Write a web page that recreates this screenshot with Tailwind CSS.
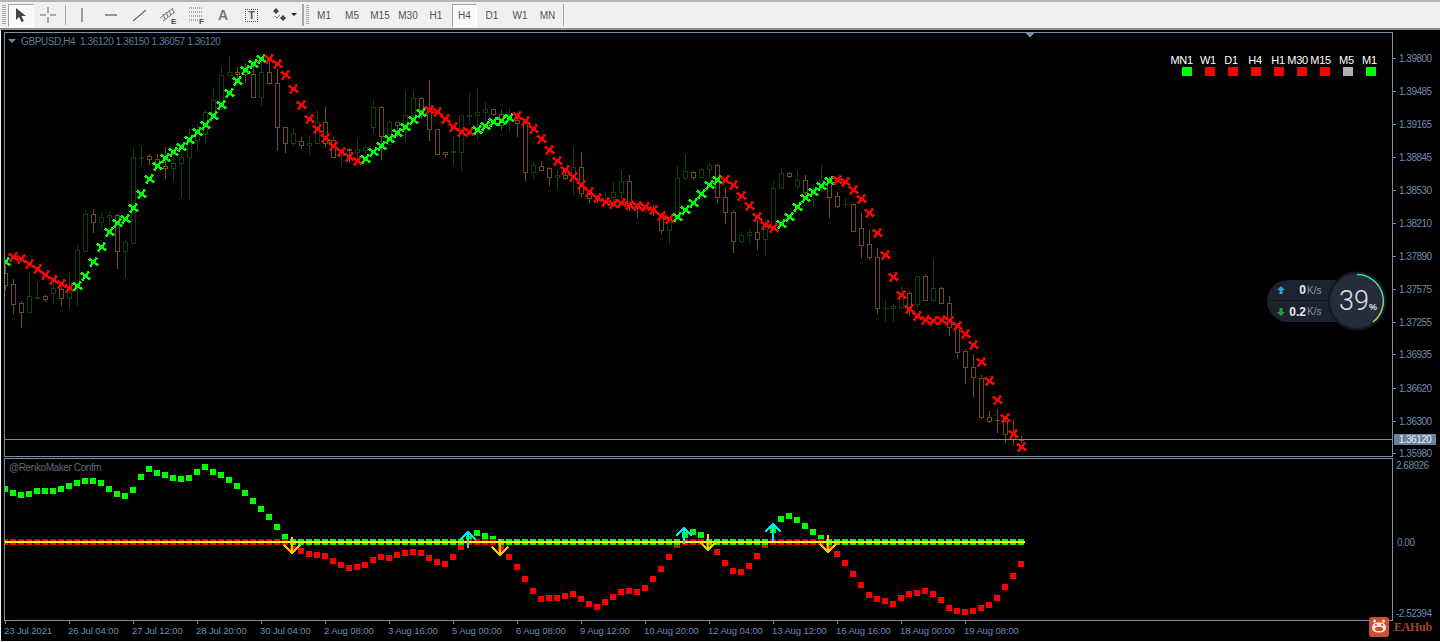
<!DOCTYPE html>
<html lang="en">
<head>
    <meta charset="UTF-8">
    <meta name="viewport" content="width=device-width, initial-scale=1.0">
    <title>GBPUSD,H4</title>
    <script src="https://cdn.jsdelivr.net/npm/@tailwindcss/browser@4"></script>
</head>
<body class="w-[1440px] h-[642px] overflow-hidden bg-[#f0f0f0] font-['Liberation_Sans',sans-serif] flex flex-col">

    <!-- Toolbar -->
    <header class="h-[30px] shrink-0 bg-[#f0f0f0] border-t-2 border-t-[#b4b4b4] border-b-2 border-b-[#8e8e8e] flex items-center text-[#555] text-[10px]">
        <div class="ml-[2px] w-[4px] h-[20px] bg-[repeating-linear-gradient(#a8a8a8_0_1px,transparent_1px_2px)]"></div>
        <button class="ml-[2px] w-[26px] h-[23px] flex items-center justify-center bg-[#fafafa] border border-t-[#a0a0a0] border-l-[#a0a0a0] border-r-white border-b-white">
            <svg width="12" height="16" viewBox="0 0 12 16"><path d="M1 1v12l3-3 2.500 5 2.500-1-2.500-5H11z" fill="#444"/></svg>
        </button>
        <div class="w-[28px] flex justify-center">
            <svg width="16" height="16" viewBox="0 0 16 16"><path d="M8 0v6M8 10v6M0 8h6M10 8h6" stroke="#666" fill="none"/></svg>
        </div>
        <div class="ml-[3px] w-[1px] h-[20px] bg-[#a8a8a8]"></div>
        <div class="ml-[1px] w-[30px] flex justify-center">
            <svg width="2" height="14" viewBox="0 0 2 14"><path d="M1 0v14" stroke="#666" stroke-width="1.200"/></svg>
        </div>
        <div class="w-[8px]"></div>
        <div class="w-[12px]"><svg width="12" height="2" viewBox="0 0 12 2"><path d="M0 1h12" stroke="#555" stroke-width="1.200"/></svg></div>
        <div class="ml-[16px] w-[12px]"><svg width="13" height="12" viewBox="0 0 13 12"><path d="M0 12L13 1" stroke="#666" stroke-width="1.200"/></svg></div>
        <div class="ml-[15px]">
            <svg width="18" height="20" viewBox="0 0 18 20">
                <path d="M0 13L12 4M3 16L15 7M5 14l-2-5M8 12L6 7M11 10L9 5M14 8L12 3" stroke="#777" fill="none"/>
                <text x="11" y="19" font-size="8" font-weight="700" fill="#444">E</text>
            </svg>
        </div>
        <div class="ml-[10px]">
            <svg width="18" height="20" viewBox="0 0 18 20">
                <path d="M1 3h14M1 7h14M1 11h14M1 15h9" stroke="#666" stroke-dasharray="1 1" fill="none"/>
                <text x="11" y="19" font-size="8" font-weight="700" fill="#444">F</text>
            </svg>
        </div>
        <span class="ml-[10px] w-[14px] text-center text-[14px] font-bold text-[#777]">A</span>
        <div class="ml-[15px] w-[13px] h-[13px] border border-dotted border-[#555] flex items-center justify-center text-[11px] font-bold text-[#555] leading-none">T</div>
        <div class="ml-[14px]">
            <svg width="16" height="14" viewBox="0 0 16 14"><path d="M4 0l3 3-3 3-3-3zM11 7l3 3-3 3-3-3z" fill="#444"/><path d="M3 8l2 2 3-3" stroke="#777" fill="none"/></svg>
        </div>
        <svg class="ml-[3px]" width="6" height="4" viewBox="0 0 6 4"><path d="M0 0h6L3 3z" fill="#222"/></svg>
        <div class="ml-[5px] w-[2px] h-[22px] bg-[#a8a8a8]"></div>
        <div class="ml-[2px] w-[3px] h-[20px] bg-[repeating-linear-gradient(#a8a8a8_0_1px,transparent_1px_2px)]"></div>
        <nav class="ml-[1px] flex items-center">
            <span class="w-[28px] h-[23px] flex items-center justify-center">M1</span>
            <span class="w-[28px] h-[23px] flex items-center justify-center">M5</span>
            <span class="w-[28px] h-[23px] flex items-center justify-center">M15</span>
            <span class="w-[28px] h-[23px] flex items-center justify-center">M30</span>
            <span class="w-[28px] h-[23px] flex items-center justify-center">H1</span>
            <span class="w-[25px] h-[23px] ml-[2px] flex items-center justify-center bg-[#fafafa] border border-t-[#a0a0a0] border-l-[#a0a0a0] border-r-white border-b-white">H4</span>
            <span class="w-[28px] h-[23px] ml-[1px] flex items-center justify-center">D1</span>
            <span class="w-[28px] h-[23px] flex items-center justify-center">W1</span>
            <span class="w-[27px] h-[23px] flex items-center justify-center">MN</span>
        </nav>
        <div class="ml-[2px] w-[1px] h-[22px] bg-[#a8a8a8]"></div>
    </header>

    <!-- Chart window -->
    <main class="ml-[1px] h-[611px] shrink-0 bg-black flex relative">
        <div class="ml-[3px] mt-[2px] w-[1389px] shrink-0">

            <!-- Price chart -->
            <section class="relative h-[425px] border border-[#7b8fa9]">
                <svg id="priceChart" class="block" width="1387" height="423" viewBox="5 33 1387 423" shape-rendering="crispEdges"></svg>
                <div class="absolute left-[3px] top-[1px] flex items-center gap-[5px] text-[10px] tracking-[-0.4px] text-[#5f7c9c] whitespace-pre">
                    <svg width="8" height="5" viewBox="0 0 8 5"><path d="M0 0h8L4 4z" fill="#6f87a5"/></svg>
                    <span>GBPUSD,H4  1.36120 1.36150 1.36057 1.36120</span>
                </div>

                <!-- Timeframe matrix -->
                <div class="absolute left-[1164px] top-[20px] flex text-white text-[11px] tracking-[-0.2px] leading-[14px]">
                    <div class="w-[23px] flex flex-col items-end"><span class="-mr-[1px]">MN1</span><i class="w-[10px] h-[9px] bg-[#00ff00]"></i></div>
                    <div class="w-[23px] flex flex-col items-end"><span class="mr-[-1px]">W1</span><i class="w-[10px] h-[9px] bg-[#ff0000]"></i></div>
                    <div class="w-[23px] flex flex-col items-end"><span>D1</span><i class="w-[10px] h-[9px] bg-[#ff0000]"></i></div>
                    <div class="w-[23px] flex flex-col items-end"><span class="mr-[-1px]">H4</span><i class="w-[10px] h-[9px] bg-[#ff0000]"></i></div>
                    <div class="w-[23px] flex flex-col items-end"><span class="mr-[-1px]">H1</span><i class="w-[10px] h-[9px] bg-[#ff0000]"></i></div>
                    <div class="w-[23px] flex flex-col items-end"><span class="mr-[-1px]">M30</span><i class="w-[10px] h-[9px] bg-[#ff0000]"></i></div>
                    <div class="w-[23px] flex flex-col items-end"><span class="mr-[-1px]">M15</span><i class="w-[10px] h-[9px] bg-[#ff0000]"></i></div>
                    <div class="w-[23px] flex flex-col items-end"><span class="mr-[-1px]">M5</span><i class="w-[10px] h-[9px] bg-[#b0b0b0]"></i></div>
                    <div class="w-[23px] flex flex-col items-end"><span class="mr-[-1px]">M1</span><i class="w-[10px] h-[9px] bg-[#00ff00]"></i></div>
                </div>

                <!-- Network / CPU widget -->
                <div class="absolute left-[1262px] top-[238px] flex items-center">
                    <div class="w-[90px] h-[42px] rounded-full bg-[#1d232e] flex flex-col text-white">
                        <div class="h-[21px] flex items-center border-b border-[#12161d]">
                            <svg class="ml-[10px]" width="8" height="8" viewBox="0 0 8 8"><path d="M4 0l4 4H5.500v4h-3V4H0z" fill="#2f9fe0"/></svg>
                            <span class="ml-[8px] w-[13px] text-right text-[12px] font-bold text-[#e8e8e8]">0</span>
                            <span class="ml-[1px] text-[10px] text-[#8b93a0]">K/s</span>
                        </div>
                        <div class="h-[21px] flex items-center">
                            <svg class="ml-[10px]" width="8" height="8" viewBox="0 0 8 8"><path d="M4 8L0 4h2.500V0h3v4H8z" fill="#22a03a"/></svg>
                            <span class="ml-[4px] w-[17px] text-right text-[12px] font-bold text-[#e8e8e8]">0.2</span>
                            <span class="ml-[1px] text-[10px] text-[#8b93a0]">K/s</span>
                        </div>
                    </div>
                    <svg class="-ml-[30px] relative" width="60" height="60" viewBox="0 0 60 60" shape-rendering="geometricPrecision">
                        <defs>
                            <linearGradient id="cpuArc" x1="0" y1="0" x2="0" y2="1">
                                <stop offset="0" stop-color="#2fd0b5"/>
                                <stop offset="1" stop-color="#a7cf5a"/>
                            </linearGradient>
                        </defs>
                        <circle cx="30" cy="30" r="29.500" fill="#151922"/>
                        <circle cx="30" cy="30" r="27" fill="#262c38"/>
                        <path d="M30 3.500A26.500 26.500 0 0 1 46 51" fill="none" stroke="url(#cpuArc)" stroke-width="1.500"/>
                        <text x="12" y="39" font-family="Roboto,sans-serif" font-weight="300" font-size="27" fill="#e0e2e6">39</text>
                        <text x="42" y="39" font-family="'Liberation Sans',sans-serif" font-weight="700" font-size="9" fill="#e0e2e6">%</text>
                    </svg>
                </div>
            </section>

            <!-- Indicator panel -->
            <section class="relative mt-[1px] h-[163px] border border-[#7b8fa9]">
                <svg id="indicatorChart" class="block" width="1387" height="161" viewBox="5 459 1387 161" shape-rendering="crispEdges"></svg>
                <span class="absolute left-[4px] top-[1px] text-[10px] tracking-[-0.4px] text-[#5e6a78]">@RenkoMaker Confm</span>
            </section>

            <!-- Time axis -->
            <div class="pl-[1px] flex text-[9.500px] tracking-[-0.1px] text-[#6f8bad] whitespace-nowrap">
                <div class="w-[64px]"><i class="block w-[1px] h-[3px] bg-[#7b8fa9]"></i><span class="block -ml-[1px] leading-[13px]">23 Jul 2021</span></div>
                <div class="w-[64px]"><i class="block w-[1px] h-[3px] bg-[#7b8fa9]"></i><span class="block -ml-[1px] leading-[13px]">26 Jul 04:00</span></div>
                <div class="w-[64px]"><i class="block w-[1px] h-[3px] bg-[#7b8fa9]"></i><span class="block -ml-[1px] leading-[13px]">27 Jul 12:00</span></div>
                <div class="w-[64px]"><i class="block w-[1px] h-[3px] bg-[#7b8fa9]"></i><span class="block -ml-[1px] leading-[13px]">28 Jul 20:00</span></div>
                <div class="w-[64px]"><i class="block w-[1px] h-[3px] bg-[#7b8fa9]"></i><span class="block -ml-[1px] leading-[13px]">30 Jul 04:00</span></div>
                <div class="w-[64px]"><i class="block w-[1px] h-[3px] bg-[#7b8fa9]"></i><span class="block -ml-[1px] leading-[13px]">2 Aug 08:00</span></div>
                <div class="w-[64px]"><i class="block w-[1px] h-[3px] bg-[#7b8fa9]"></i><span class="block -ml-[1px] leading-[13px]">3 Aug 16:00</span></div>
                <div class="w-[64px]"><i class="block w-[1px] h-[3px] bg-[#7b8fa9]"></i><span class="block -ml-[1px] leading-[13px]">5 Aug 00:00</span></div>
                <div class="w-[64px]"><i class="block w-[1px] h-[3px] bg-[#7b8fa9]"></i><span class="block -ml-[1px] leading-[13px]">6 Aug 08:00</span></div>
                <div class="w-[64px]"><i class="block w-[1px] h-[3px] bg-[#7b8fa9]"></i><span class="block -ml-[1px] leading-[13px]">9 Aug 12:00</span></div>
                <div class="w-[64px]"><i class="block w-[1px] h-[3px] bg-[#7b8fa9]"></i><span class="block -ml-[1px] leading-[13px]">10 Aug 20:00</span></div>
                <div class="w-[64px]"><i class="block w-[1px] h-[3px] bg-[#7b8fa9]"></i><span class="block -ml-[1px] leading-[13px]">12 Aug 04:00</span></div>
                <div class="w-[64px]"><i class="block w-[1px] h-[3px] bg-[#7b8fa9]"></i><span class="block -ml-[1px] leading-[13px]">13 Aug 12:00</span></div>
                <div class="w-[64px]"><i class="block w-[1px] h-[3px] bg-[#7b8fa9]"></i><span class="block -ml-[1px] leading-[13px]">16 Aug 16:00</span></div>
                <div class="w-[64px]"><i class="block w-[1px] h-[3px] bg-[#7b8fa9]"></i><span class="block -ml-[1px] leading-[13px]">18 Aug 00:00</span></div>
                <div class="w-[64px]"><i class="block w-[1px] h-[3px] bg-[#7b8fa9]"></i><span class="block -ml-[1px] leading-[13px]">19 Aug 08:00</span></div>
            </div>
        </div>

        <!-- Price axis, filled in below -->
        <div id="priceAxis" class="relative flex-1 text-[10px] tracking-[-0.5px] text-[#6f8bad]"></div>

        <!-- Watermark -->
        <div class="absolute left-[1368px] top-[587px] flex items-center gap-[5px]">
            <svg width="20" height="20" viewBox="0 0 20 20" shape-rendering="geometricPrecision">
                <rect width="20" height="20" rx="3" fill="#c9512e"/>
                <circle cx="5.500" cy="4" r="1.500" fill="#f6e3da"/>
                <circle cx="14.500" cy="4" r="1.500" fill="#f6e3da"/>
                <rect x="3" y="5.500" width="14" height="10" rx="5" fill="#f6e3da"/>
                <rect x="6" y="10" width="8" height="4" rx="2" fill="#c9512e"/>
                <circle cx="7" cy="8" r="1" fill="#c9512e"/>
                <circle cx="13" cy="8" r="1" fill="#c9512e"/>
            </svg>
            <span class="font-['Liberation_Serif',serif] font-bold text-[12px] text-[#a8432a] tracking-[-0.3px]">EAHub</span>
        </div>
    </main>

    <script>
        // bars sit 8px apart, first one at x=5
        const barX = (i) => 5 + i * 8;

        // candles: type (g = bull, b = bear), wick top, body top, body bottom, wick bottom
        const candles = [
            ['b',260,273,285,290],['b',279,284,304,314],['b',301,303,312,328],['g',272,296,312,312],
            ['g',282,297,298,298],['b',295,296,299,302],['g',277,288,293,304],['b',287,289,298,306],
            ['g',272,292,298,309],['g',245,250,287,306],['g',210,214,251,252],['b',209,214,222,233],
            ['g',213,217,222,228],['g',211,215,217,225],['b',214,215,251,269],['g',240,242,251,278],
            ['g',148,157,243,243],['g',146,157,158,166],['b',154,156,159,166],['b',154,159,165,168],
            ['b',147,166,168,179],['g',157,163,168,181],['g',156,157,163,198],['g',129,140,157,200],
            ['g',125,130,140,150],['g',110,112,134,143],['g',87,100,113,120],['g',67,75,102,110],
            ['g',55,72,75,77],['b',67,72,74,80],['b',63,72,74,83],['b',63,74,97,98],
            ['g',62,72,97,106],['b',59,72,83,85],['b',69,83,127,151],['b',127,127,143,153],
            ['g',127,133,143,146],['b',137,141,145,149],['g',136,143,145,155],['g',110,122,143,143],
            ['b',106,122,143,147],['b',137,140,157,157],['g',148,150,155,166],['b',148,149,150,162],
            ['g',139,149,152,162],['g',145,147,150,156],['g',100,107,127,134],['b',106,107,136,160],
            ['g',120,122,144,146],['b',122,122,125,137],['g',91,115,124,142],['g',91,98,115,124],
            ['b',97,98,110,119],['b',80,110,129,141],['b',129,129,154,155],['b',152,152,154,158],
            ['g',136,151,152,165],['g',115,115,152,171],['g',93,115,116,124],['g',89,112,115,140],
            ['g',102,109,112,122],['b',109,109,114,116],['b',110,114,125,130],['g',108,114,120,132],
            ['b',113,120,123,137],['b',123,123,172,182],['g',161,165,172,179],['b',161,166,170,170],
            ['b',167,168,177,186],['g',170,175,177,189],['b',170,175,178,180],['g',147,167,176,195],
            ['b',152,167,193,198],['b',192,194,198,203],['b',195,198,200,203],['g',193,198,200,205],
            ['g',182,192,197,207],['g',170,181,192,198],['b',175,181,203,211],['b',203,206,208,218],
            ['g',205,207,210,213],['b',205,209,212,216],['b',213,215,230,234],['g',217,222,230,244],
            ['g',166,178,217,220],['g',154,171,178,180],['b',171,172,177,180],['g',168,169,177,178],
            ['g',163,165,169,178],['b',164,165,197,203],['b',188,197,212,224],['b',210,212,241,253],
            ['g',232,235,241,244],['g',229,232,235,243],['b',220,232,239,250],['g',219,229,239,256],
            ['g',181,188,229,230],['g',167,173,188,188],['b',172,173,176,178],['g',170,180,186,189],
            ['b',175,180,192,195],['g',186,189,195,207],['g',165,180,189,192],['b',177,180,197,218],
            ['b',192,196,206,208],['g',198,204,204,209],['b',203,204,231,232],['b',213,228,245,258],
            ['b',230,244,257,260],['b',248,257,308,314],['g',300,308,308,322],['g',304,306,308,322],
            ['g',286,295,307,310],['b',291,293,307,316],['g',276,276,304,309],['b',274,276,300,301],
            ['g',259,288,300,302],['b',287,288,303,304],['b',296,303,327,336],['b',323,327,352,359],
            ['b',349,351,367,384],['b',354,367,377,398],['b',375,378,417,419],['b',411,417,421,423],
            ['b',409,420,420,433],['b',417,421,434,443],['b',420,433,439,446],['b',436,440,440,443],
        ];

        // renko cross line, one y per bar
        const crossY = [
            262,257,259,264,269,275,280,284,288,286,276,262,247,232,223,219,
            208,194,179,166,158,152,147,140,132,125,116,105,93,81,70,64,
            59,59,64,75,89,105,119,129,138,146,152,157,161,159,152,146,
            139,133,127,120,113,110,112,119,127,132,132,130,126,122,121,118,
            116,121,129,139,150,161,170,177,185,192,198,202,204,203,205,206,
            207,210,216,219,217,210,203,194,185,180,180,185,196,206,217,225,
            228,224,217,207,198,192,186,181,180,182,190,199,213,233,255,277,
            295,309,316,320,321,320,321,326,334,345,362,381,400,418,434,447,
        ];
        const crossGreen = [[0,0],[9,32],[45,52],[59,63],[84,89],[97,103]];

        // confirm histogram values, one y per bar (542 is the zero line)
        const confirmY = [
            489,493,495,494,491,491,491,489,486,483,481,481,483,489,494,496,
            490,477,469,473,475,478,479,478,472,467,472,475,480,486,493,501,
            509,517,527,537,549,551,554,555,556,561,565,568,567,565,560,557,
            558,555,553,552,553,558,562,564,557,547,539,533,536,539,548,557,
            567,579,591,599,598,598,596,594,599,604,607,602,597,592,591,592,
            588,579,569,557,545,535,532,535,545,552,563,571,572,566,556,545,
            530,519,516,520,526,532,538,546,554,563,574,585,595,599,601,604,
            598,594,593,591,594,600,608,611,612,611,608,605,598,587,576,564,
        ];
        const confirmGreen = [[0,35],[58,61],[85,87],[96,102]];

        const inRange = (ranges, i) => ranges.some(([a, b]) => i >= a && i <= b);

        let price = '';
        candles.forEach((c, i) => {
            const x = barX(i);
            const col = c[0] === 'g' ? '#0e3f0e' : '#6b5012';
            price += `<path d="M${x + .5} ${c[1]}V${c[2]}M${x + .5} ${c[3]}V${c[4]}" stroke="${col}"/>`;
            if (c[3] - c[2] < 1) {
                price += `<path d="M${x - 2} ${c[2] + .5}h5" stroke="${col}"/>`;
            } else {
                price += `<rect x="${x - 1.5}" y="${c[2] + .5}" width="4" height="${c[3] - c[2]}" fill="#000" stroke="${col}"/>`;
            }
        });
        price += '<path d="M5 439.500H1392" stroke="#7f8a98"/>';
        crossY.forEach((y, i) => {
            const x = barX(i) + .5;
            const col = inRange(crossGreen, i) ? '#00ff00' : '#ff0000';
            price += `<path d="M${x - 4.500} ${y - 3.500}L${x + 4.500} ${y + 3.500}M${x - 3.500} ${y + 4.500}L${x + 3.500} ${y - 4.500}" stroke="${col}" stroke-width="2.600"/>`;
        });
        price += '<path d="M1025 33h9l-4.500 4.500z" fill="#7b8fa9"/>';
        document.getElementById('priceChart').innerHTML = price;

        const upArrow = (x, tip, bottom) =>
            `<path d="M${x - 8} ${tip + 8}L${x} ${tip}L${x + 8} ${tip + 8}M${x} ${tip}V${bottom}" fill="none" stroke="#00e8f8" stroke-width="2"/>`;
        const downArrow = (x, top, tip) =>
            `<path d="M${x - 8} ${tip - 8}L${x} ${tip}L${x + 8} ${tip - 8}M${x} ${top}V${tip}" fill="none" stroke="#ffc800" stroke-width="2"/>`;

        let confirm = '';
        confirmY.forEach((y, i) => {
            const isGreen = inRange(confirmGreen, i);
            const x = barX(i);
            confirm += `<rect x="${x - 3}" y="${y - 3}" width="6" height="6" fill="${isGreen ? '#00ff00' : '#ff0000'}"/>`;
            confirm += `<rect x="${x - 3}" y="539" width="6" height="6" fill="${isGreen ? '#ff0000' : '#00ff00'}"/>`;
        });
        confirm += '<rect x="5" y="541" width="1020" height="2" fill="#ffff00"/>';
        confirm += upArrow(468, 532, 548) + upArrow(684, 528, 544) + upArrow(773, 524, 541);
        confirm += downArrow(292, 537, 553) + downArrow(500, 539, 555) + downArrow(708, 534, 550) + downArrow(828, 535, 552);
        document.getElementById('indicatorChart').innerHTML = confirm;

        // right hand scale, y is page position
        const axisTicks = [
            ['1.39800',58],['1.39485',91],['1.39165',124],['1.38845',157],['1.38530',190],['1.38210',223],
            ['1.37890',256],['1.37575',289],['1.37255',322],['1.36935',354],['1.36620',388],['1.36300',421],['1.35980',453],
        ];
        const axis = document.getElementById('priceAxis');
        const addAxisLabel = (text, y, cls) => {
            const el = document.createElement('span');
            el.className = cls;
            el.style.top = (y - 30 - 5) + 'px';
            el.textContent = text;
            axis.appendChild(el);
        };
        axisTicks.forEach(([text, y]) => {
            addAxisLabel(text, y, 'absolute left-[6px] leading-[12px]');
            const tick = document.createElement('i');
            tick.className = 'absolute left-0 w-[3px] h-[1px] bg-[#7b8fa9]';
            tick.style.top = (y - 30) + 'px';
            axis.appendChild(tick);
        });
        addAxisLabel('1.36120', 439, 'absolute left-[1px] w-[42px] h-[11px] leading-[11px] text-center bg-[#6b829e] text-[#e6ebf0]');
        addAxisLabel('2.68926', 465, 'absolute left-[3px] leading-[12px]');
        addAxisLabel('0.00', 542, 'absolute left-[4px] leading-[12px]');
        addAxisLabel('-2.52394', 613, 'absolute left-[3px] leading-[12px]');
    </script>
</body>
</html>
